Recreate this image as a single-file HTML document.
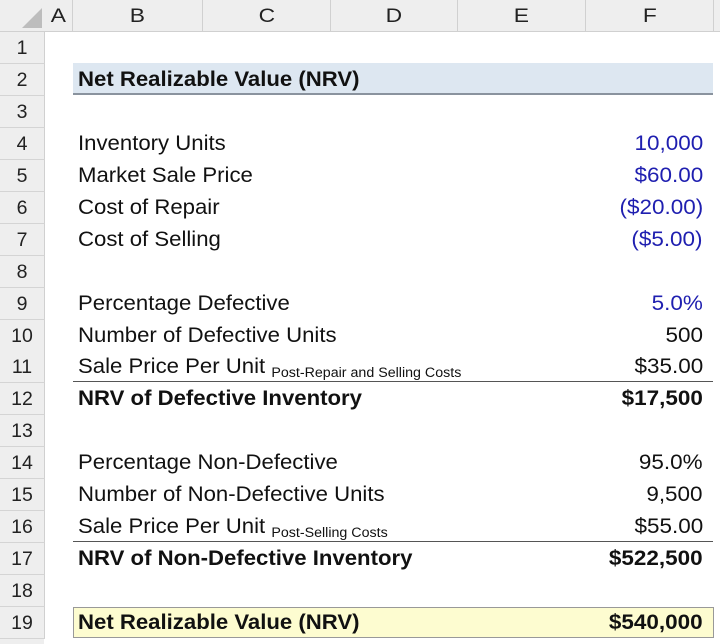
<!DOCTYPE html>
<html><head><style>
body{margin:0;width:720px;height:644px;background:#fff;font-family:"Liberation Sans",Arial,sans-serif;position:relative;overflow:hidden;color:#111}
.hdr{position:absolute;top:0;left:0;width:720px;height:31px;background:#eeeeee;border-bottom:1px solid #d0d0d0}
.ch{position:absolute;top:0;height:31px;line-height:33px;text-align:center;font-size:19px;color:#222;border-right:1px solid #d0d0d0}
.ch span{display:inline-block;transform:scaleX(1.2)}
.rh{position:absolute;left:0;width:44px;height:31px;background:#eeeeee;border-bottom:1px solid #d4d4d4;border-right:1px solid #d0d0d0;text-align:center;line-height:33px;font-size:19.5px;color:#222}
.l{position:absolute;left:78px;font-size:21px;height:32px;line-height:33px;white-space:nowrap;transform:scaleX(1.055);transform-origin:0 0}
.v{position:absolute;right:17px;font-size:21px;height:32px;line-height:33px;text-align:right;white-space:nowrap;transform:scaleX(1.07);transform-origin:100% 0}
.b{font-weight:bold}
.blue{color:#1f1fb0}
sub{font-size:13.5px;vertical-align:-4px}
</style></head><body>
<div class="hdr"></div>
<svg style="position:absolute;left:22px;top:8px" width="20" height="20"><polygon points="20,0 20,20 0,20" fill="#bdbdbd"/></svg>
<div class="ch" style="left:44px;width:28px"><span>A</span></div>
<div class="ch" style="left:73px;width:129px"><span>B</span></div>
<div class="ch" style="left:203px;width:127px"><span>C</span></div>
<div class="ch" style="left:331px;width:126px"><span>D</span></div>
<div class="ch" style="left:458px;width:127px"><span>E</span></div>
<div class="ch" style="left:586px;width:127px"><span>F</span></div>
<div style="position:absolute;left:72px;top:0;width:1px;height:31px;background:#d0d0d0"></div>

<div style="position:absolute;left:73px;top:63px;width:640px;height:30px;background:#dde7f1;border-bottom:2px solid #8a939e"></div>
<div style="position:absolute;left:73px;top:607px;width:639px;height:29px;background:#fdfcd0;border:1px solid #999"></div>
<div style="position:absolute;left:73px;top:381px;width:640px;height:1px;background:#555"></div>
<div style="position:absolute;left:73px;top:541px;width:640px;height:1px;background:#555"></div>

<div class="rh" style="top:32px">1</div>
<div class="rh" style="top:64px">2</div>
<div class="rh" style="top:96px">3</div>
<div class="rh" style="top:128px">4</div>
<div class="rh" style="top:160px">5</div>
<div class="rh" style="top:192px">6</div>
<div class="rh" style="top:224px">7</div>
<div class="rh" style="top:256px">8</div>
<div class="rh" style="top:288px">9</div>
<div class="rh" style="top:320px">10</div>
<div class="rh" style="top:351px">11</div>
<div class="rh" style="top:383px">12</div>
<div class="rh" style="top:415px">13</div>
<div class="rh" style="top:447px">14</div>
<div class="rh" style="top:479px">15</div>
<div class="rh" style="top:511px">16</div>
<div class="rh" style="top:543px">17</div>
<div class="rh" style="top:575px">18</div>
<div class="rh" style="top:607px">19</div>
<div style="position:absolute;left:0;top:639px;width:44px;height:5px;background:#eee"></div>

<div class="l b" style="top:63px">Net Realizable Value (NRV)</div>
<div class="l" style="top:127px">Inventory Units</div><div class="v blue" style="top:127px">10,000</div>
<div class="l" style="top:159px">Market Sale Price</div><div class="v blue" style="top:159px">$60.00</div>
<div class="l" style="top:191px">Cost of Repair</div><div class="v blue" style="top:191px">($20.00)</div>
<div class="l" style="top:223px">Cost of Selling</div><div class="v blue" style="top:223px">($5.00)</div>
<div class="l" style="top:287px">Percentage Defective</div><div class="v blue" style="top:287px">5.0%</div>
<div class="l" style="top:319px">Number of Defective Units</div><div class="v" style="top:319px">500</div>
<div class="l" style="top:350px">Sale Price Per Unit <sub>Post-Repair and Selling Costs</sub></div><div class="v" style="top:350px">$35.00</div>
<div class="l b" style="top:382px">NRV of Defective Inventory</div><div class="v b" style="top:382px">$17,500</div>
<div class="l" style="top:446px">Percentage Non-Defective</div><div class="v" style="top:446px">95.0%</div>
<div class="l" style="top:478px">Number of Non-Defective Units</div><div class="v" style="top:478px">9,500</div>
<div class="l" style="top:510px">Sale Price Per Unit <sub>Post-Selling Costs</sub></div><div class="v" style="top:510px">$55.00</div>
<div class="l b" style="top:542px">NRV of Non-Defective Inventory</div><div class="v b" style="top:542px">$522,500</div>
<div class="l b" style="top:606px">Net Realizable Value (NRV)</div><div class="v b" style="top:606px">$540,000</div>
</body></html>
